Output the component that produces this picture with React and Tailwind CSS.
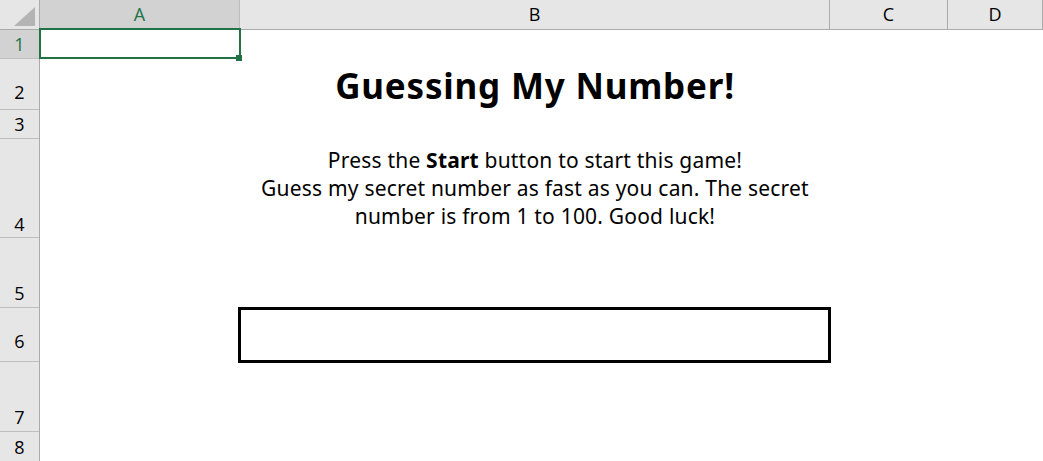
import React from 'react';

const columns = [
  { key: 'A', width: 'w-[200px]', selected: true },
  { key: 'B', width: 'w-[590px]' },
  { key: 'C', width: 'w-[118px]' },
  { key: 'D', width: 'flex-1' },
];

// row heights and label offsets taken from the sheet
const rows = [
  { n: 1, h: 'h-[29px]', pb: 'pb-[1px]', selected: true },
  { n: 2, h: 'h-[51px]', pb: 'pb-[4px]' },
  { n: 3, h: 'h-[29px]', pb: 'pb-[1px]' },
  { n: 4, h: 'h-[99px]', pb: 'pb-0' },
  { n: 5, h: 'h-[70px]', pb: 'pb-[1px]' },
  { n: 6, h: 'h-[54px]', pb: 'pb-[7px]' },
  { n: 7, h: 'h-[70px]', pb: 'pb-[1px]' },
  { n: 8, h: 'h-[30px]', pb: 'pb-[1px]' },
];

const App = () => {
  return (
    <div className="relative w-[1043px] h-[461px] overflow-hidden bg-white font-['Open_Sans',sans-serif]">
      {/* column headers */}
      <div className="flex h-[30px]">
        <div className="w-[40px] bg-[#e6e6e6] border-r border-b border-[#ababab] flex items-end justify-end pr-[3px] pb-[2px]">
          <svg width="22" height="20" viewBox="0 0 22 20">
            <polygon points="21,0 21,19 0,19" fill="#b4b4b4" />
          </svg>
        </div>
        {columns.map((c) => (
          <div
            key={c.key}
            className={`${c.width} flex items-center justify-center text-[18px] border-r ${
              c.selected
                ? 'bg-[#d2d2d2] text-[#217346] border-b-2 border-b-[#217346] border-r-[#bdbdbd]'
                : 'bg-[#e6e6e6] text-black border-b border-[#ababab]'
            }`}
          >
            {c.key}
          </div>
        ))}
      </div>

      <div className="flex">
        {/* row headers */}
        <div className="w-[40px] border-r border-[#ababab] flex flex-col">
          {rows.map((r) => (
            <div
              key={r.n}
              className={`${r.h} ${r.pb} border-b border-[#bfbfbf] flex items-end justify-center text-[18px] leading-[25px] ${
                r.selected ? 'bg-[#d2d2d2] text-[#217346]' : 'bg-[#e6e6e6] text-black'
              }`}
            >
              {r.n}
            </div>
          ))}
        </div>

        {/* sheet cells */}
        <div className="flex-1 grid grid-cols-[200px_590px_118px_1fr] grid-rows-[30px_51px_29px_99px_70px_54px_70px_30px]">
          <div className="col-start-2 row-start-2 flex items-end justify-center pb-[4px]">
            <h1 className="font-['Noto_Sans',sans-serif] font-bold text-[35px] leading-[42px] tracking-[0.8px] text-black">
              Guessing My Number!
            </h1>
          </div>
          <div className="col-start-2 row-start-4 flex items-start justify-center pt-[6px]">
            <p className="font-['Noto_Sans',sans-serif] text-[21px] leading-[28px] tracking-[0.2px] text-center text-black">
              Press the <span className="font-bold">Start</span> button to start this game!
              <br />
              Guess my secret number as fast as you can. The secret
              <br />
              number is from 1 to 100. Good luck!
            </p>
          </div>
          <div className="col-start-2 row-start-6 -ml-[2px] -mt-[2px] w-[593px] h-[56px] border-[3px] border-black" />
        </div>
      </div>

      {/* active cell selection */}
      <div className="absolute left-[39px] top-[28px] w-[202px] h-[31px] border-2 border-[#217346]" />
      <div className="absolute left-[236px] top-[55px] w-[6px] h-[6px] bg-[#217346]" />
    </div>
  );
};

export default App;
